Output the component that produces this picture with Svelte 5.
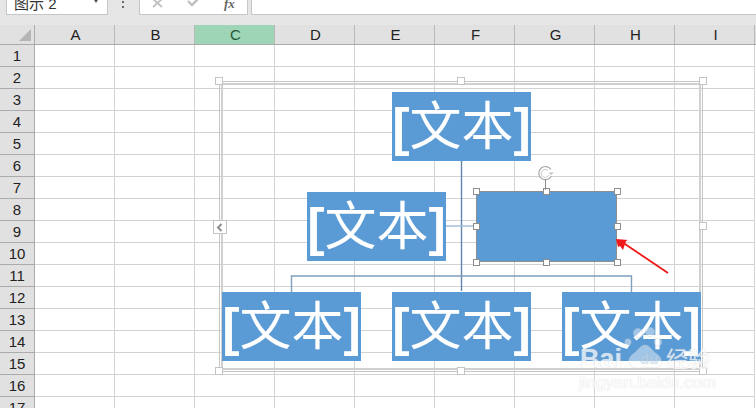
<script>
  const cols = ['A','B','C','D','E','F','G','H','I'];
  const rows = Array.from({ length: 17 }, (_, i) => i + 1);
  const boxes = [
    { x: 173, y: 11 }, { x: 88, y: 111 }, { x: 3, y: 211 }, { x: 173, y: 211 }, { x: 343, y: 211 }
  ];
  const handles = [[0,0],[70,0],[141,0],[0,35],[141,35],[0,71],[70,71],[141,71]];
  const frameHandles = [[0,0],[242,0],[484,0],[484,145],[0,290],[242,290],[484,290]];
</script>

<div class="page">
  <div class="toolbar">
    <div class="namebox"><span class="name">图示 2</span><span class="caret"></span></div>
    <div class="dots"><i></i><i></i></div>
    <div class="fxbox">
      <svg width="108" height="15" viewBox="0 0 108 15">
        <path d="M13 -1l9 8M22 -1l-9 8" stroke="#c0c0c0" stroke-width="1.8" fill="none"/>
        <path d="M48 1l4 4 7-7" stroke="#c0c0c0" stroke-width="2.4" fill="none"/>
      </svg>
      <span class="fx">fx</span>
    </div>
    <div class="formula"></div>
  </div>

  <div class="sheet">
    <div class="head">
      <div class="corner"><span class="tri"></span></div>
      {#each cols as c}
        <div class="colh" class:sel={c === 'C'}>{c}</div>
      {/each}
    </div>
    {#each rows as r}
      <div class="row">
        <div class="rowh">{r}</div>
        {#each cols as c}<div class="cell"></div>{/each}
      </div>
    {/each}
  </div>

  <div class="art">
    <div class="inner"></div>
    {#each frameHandles as h}
      <span class="fh" style="left:{h[0]-4}px;top:{h[1]-4}px"></span>
    {/each}
    <div class="tab"><svg width="8" height="9" viewBox="0 0 8 9"><path d="M5.5 1L2 4.5 5.5 8" stroke="#8e8e8e" stroke-width="2" fill="none"/></svg></div>

    <svg class="lines" width="484" height="291" viewBox="0 0 484 291">
      <path d="M242.5 80v130" stroke="#5f87ab" stroke-width="1.4" fill="none"/>
      <path d="M227 145h31" stroke="#9dbad6" stroke-width="1.4" fill="none"/>
      <path d="M72.5 211v-16h340v16" stroke="#7f9fbd" stroke-width="1.4" fill="none"/>
    </svg>

    {#each boxes as b}
      <div class="box" style="left:{b.x}px;top:{b.y}px"><span class="br">[</span>文本<span class="br">]</span></div>
    {/each}

    <div class="selected">
      {#each handles as h}
        <span class="sh" style="left:{h[0]-3}px;top:{h[1]-3}px"></span>
      {/each}
    </div>
    <svg class="rot" width="20" height="26" viewBox="0 0 20 26">
      <path d="M15 5.5A6.6 6.6 0 1 0 15.4 12" stroke="#a8a8a8" stroke-width="1.2" fill="#fff"/>
      <path d="M12 6.5A4 4 0 1 0 13 11" stroke="#c8c8c8" fill="none"/>
      <path d="M12.5 8.5h5.5l-3 2.5z" fill="#c0c0c0"/>
      <path d="M9.5 15v11" stroke="#8e8e8e"/>
    </svg>
  </div>

  <svg class="arrow" width="70" height="50" viewBox="0 0 70 50">
    <path d="M58 44L12 13" stroke="#f01818" stroke-width="1.8" fill="none"/>
    <path d="M6 10l2 8 2-1 3 4 3-9 2-1-12-1z" fill="#f01818"/>
  </svg>

  <div class="mark">
    <svg class="paw" width="46" height="48" viewBox="0 0 46 48">
      <g fill="#fff" fill-opacity=".6" stroke="#c8c8c8" stroke-opacity=".45">
        <circle cx="8" cy="17" r="3.2"/><circle cx="18" cy="8" r="4.6"/><circle cx="30" cy="7" r="4.6"/><circle cx="38" cy="17" r="3.8"/>
        <path d="M25 20c5 0 7 6 12 9 6 4 7 14-3 14-3 0-6-1-9-1s-6 2-9 1c-9-1-9-10-3-14 5-3 7-9 12-9z"/>
      </g>
    </svg>
    <span class="bai">Bai</span><span class="du">du</span><span class="jy">经验</span>
    <span class="url">jingyan.baidu.com</span>
  </div>
</div>

<style>
  :global(body) { margin: 0; }
  .page {
    position: relative;
    width: 756px;
    height: 408px;
    overflow: hidden;
    background: #e6e6e6;
    font-family: "Liberation Sans", "Noto Sans CJK SC", sans-serif;
    color: #222;
  }
  .toolbar {
    height: 25px;
    box-sizing: border-box;
    display: flex;
    align-items: flex-start;
    background: #e6e6e6;
  }
  .namebox {
    width: 102px;
    height: 15px;
    margin-left: 6px;
    box-sizing: border-box;
    background: #fff;
    border: 1px solid #c6c6c6;
    border-top: 0;
    position: relative;
    overflow: hidden;
  }
  .name {
    position: absolute;
    left: 7px;
    bottom: 0;
    font-size: 15px;
    line-height: 20px;
    color: #333;
  }
  .caret {
    position: absolute;
    right: 9px;
    top: 0;
    border: 2px solid transparent;
    border-top: 3px solid #555;
    border-bottom: 0;
  }
  .dots {
    width: 30px;
    display: flex;
    flex-direction: column;
    align-items: center;
    gap: 3px;
    padding-top: 1px;
  }
  .dots i { width: 2px; height: 2px; background: #6a6a6a; }
  .fxbox {
    width: 109px;
    height: 15px;
    margin-left: 1px;
    box-sizing: border-box;
    background: #fff;
    border: 1px solid #c6c6c6;
    border-top: 0;
    position: relative;
    overflow: hidden;
  }
  .fxbox svg { display: block; }
  .fx {
    position: absolute;
    left: 84px;
    top: -3px;
    font: italic bold 13px/14px "Liberation Serif", serif;
    color: #666;
  }
  .formula {
    flex: 1;
    height: 15px;
    margin-left: 3px;
    box-sizing: border-box;
    background: #fff;
    border-left: 1px solid #c6c6c6;
    border-bottom: 1px solid #c6c6c6;
  }
  .sheet { background: #fff; }
  .head { display: flex; height: 19px; background: #e1e1e1; border-bottom: 1px solid #ababab; }
  .corner {
    width: 35px;
    box-sizing: border-box;
    border-right: 1px solid #ababab;
    position: relative;
  }
  .tri {
    position: absolute;
    right: 3px;
    bottom: 3px;
    border-left: 12px solid transparent;
    border-bottom: 12px solid #b5b5b5;
  }
  .colh {
    width: 80px;
    flex: none;
    box-sizing: border-box;
    border-right: 1px solid #b9b9b9;
    padding-left: 2px;
    text-align: center;
    font-size: 15px;
    line-height: 20px;
    color: #222;
  }
  .colh.sel { background: #9fd5b7; color: #1f5a38; }
  .row { display: flex; height: 22px; box-sizing: border-box; }
  .rowh {
    width: 35px;
    flex: none;
    box-sizing: border-box;
    background: #e1e1e1;
    border-right: 1px solid #ababab;
    border-bottom: 1px solid #ababab;
    text-align: center;
    font-size: 15px;
    line-height: 22px;
  }
  .cell {
    width: 80px;
    flex: none;
    box-sizing: border-box;
    border-right: 1px solid #d2d2d2;
    border-bottom: 1px solid #d2d2d2;
  }
  .art {
    position: absolute;
    left: 219px;
    top: 81px;
    width: 484px;
    height: 291px;
  }
  .inner {
    position: absolute;
    inset: 0;
    border: 1px solid #c6c6c6;
  }
  .inner::after {
    content: "";
    position: absolute;
    inset: 1px;
    border: 2px solid #d0d0d0;
  }
  .fh {
    position: absolute;
    width: 8px;
    height: 8px;
    box-sizing: border-box;
    background: #fff;
    border: 1px solid #c4c4c4;
  }
  .tab {
    position: absolute;
    left: -6px;
    top: 139px;
    width: 14px;
    height: 14px;
    box-sizing: border-box;
    background: #fff;
    border: 1px solid #c4c4c4;
    display: flex;
    align-items: center;
    justify-content: center;
  }
  .lines { position: absolute; left: 0; top: 0; }
  .box {
    position: absolute;
    width: 139px;
    height: 69px;
    background: #5b9bd5;
    color: #fff;
    font-family: "Noto Sans CJK SC", serif;
    font-size: 52px;
    line-height: 62px;
    text-align: center;
    white-space: nowrap;
    overflow: hidden;
  }
  .br { font-family: "Liberation Sans", sans-serif; font-weight: bold; }
  .selected {
    position: absolute;
    left: 257px;
    top: 110px;
    width: 141px;
    height: 71px;
    box-sizing: border-box;
    background: #5b9bd5;
    border: 1px solid #8e8e8e;
  }
  .sh {
    position: absolute;
    width: 7px;
    height: 7px;
    margin: -1px 0 0 -1px;
    box-sizing: border-box;
    background: #fff;
    border: 1px solid #8e8e8e;
  }
  .rot { position: absolute; left: 317px; top: 83px; }
  .arrow { position: absolute; left: 610px; top: 229px; }
  .mark {
    position: absolute;
    left: 578px;
    top: 325px;
    width: 178px;
    height: 80px;
    color: #fff;
    opacity: .72;
  }
  .paw { position: absolute; left: 42px; top: 0; }
  .bai, .du, .jy, .url {
    position: absolute;
    text-shadow: 0 0 1px #bcbcbc;
    white-space: nowrap;
  }
  .bai { left: 2px; top: 19px; font: bold 27px/30px "Liberation Sans", sans-serif; }
  .du { left: 62px; top: 26px; font: bold 15px/16px "Liberation Sans", sans-serif; color: #cfe0f0; }
  .jy { left: 88px; top: 20px; font-size: 22px; line-height: 24px; font-family: "Noto Sans CJK SC", sans-serif; }
  .url { left: 1px; top: 49px; font: 17px/18px "Liberation Sans", sans-serif; }
</style>
